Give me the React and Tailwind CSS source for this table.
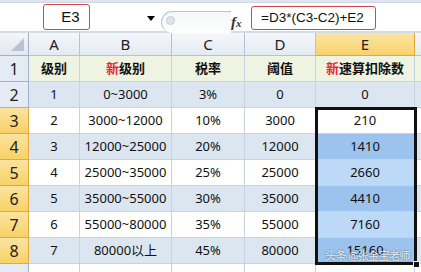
import React from 'react'

const font = { fontFamily: '"Noto Sans", "Noto Sans CJK SC", sans-serif' }
const arial = { fontFamily: '"Liberation Sans", "Noto Sans CJK SC", sans-serif' }

const rows = [
  ['1', '0~3000', '3%', '0', '0'],
  ['2', '3000~12000', '10%', '3000', '210'],
  ['3', '12000~25000', '20%', '12000', '1410'],
  ['4', '25000~35000', '25%', '25000', '2660'],
  ['5', '35000~55000', '30%', '35000', '4410'],
  ['6', '55000~80000', '35%', '55000', '7160'],
  ['7', '80000以上', '45%', '80000', '15160'],
]

function Cell({ children, className = '' }) {
  return (
    <div className={`flex items-center justify-center border-r border-b border-[#c6d3e3] text-[13px] text-[#111] ${className}`}>
      {children}
    </div>
  )
}

export default function App() {
  return (
    <div className="relative w-[421px] h-[272px] overflow-hidden bg-white" style={font}>
      {/* top strip */}
      <div className="h-[3px] bg-[#dfe6ef] border-b border-[#cfd8e4]" />

      {/* formula bar */}
      <div className="h-[30px] flex items-start border-b-2 border-[#d3dbe6] bg-white">
        <div className="ml-[43px] mt-[1px] w-[47px] h-[26px] shrink-0 border border-[#d04848] rounded-[3px] flex items-center justify-center pl-2 text-[15px] text-[#111]" style={arial}>
          E3
        </div>
        <div className="ml-[57px] mt-[13px] w-0 h-0 shrink-0 border-l-[4px] border-r-[4px] border-t-[5px] border-l-transparent border-r-transparent border-t-black" />
        <div className="ml-[6px] mt-[8px] w-[70px] h-[22px] shrink-0 rounded-l-full border-l border-t border-[#b9c4d3] bg-gradient-to-b from-[#f4f6f9] to-white flex items-start pl-[4px] pt-[4px]">
          <div className="w-[9px] h-[9px] rounded-full bg-[#dde3ec] border border-[#c6cfdb]" />
        </div>
        <div className="w-[14px] shrink-0 mt-[8px] text-[15px] italic font-bold text-[#333]" style={{ fontFamily: '"Liberation Serif", serif' }}>
          f<span className="text-[11px]">x</span>
        </div>
        <div className="ml-[6px] mt-[3px] w-[125px] h-[24px] shrink-0 border border-[#d04848] rounded-[3px] flex items-center pl-[9px] text-[13.5px] text-[#111] whitespace-nowrap" style={arial}>
          =D3*(C3-C2)+E2
        </div>
      </div>

      {/* sheet */}
      <div className="grid grid-cols-[29px_51px_92px_73px_71px_99px_1fr] grid-rows-[23px_26px_26px_26px_26px_26px_26px_26px_26px_20px]">
        {/* column headers */}
        <div className="flex items-end justify-end pr-[4px] pb-[4px] border-r border-b border-[#9fb3c8] bg-gradient-to-b from-[#f3f6fa] to-[#e2e8f0]">
          <svg width="13" height="13" viewBox="0 0 13 13">
            <polygon points="13,0 13,13 0,13" fill="#b7c4d4" />
          </svg>
        </div>
        {['A', 'B', 'C', 'D'].map((c) => (
          <div key={c} className="flex items-center justify-center border-r border-b border-[#b3c3d6] bg-gradient-to-b from-[#f5f7fa] to-[#e4eaf2] text-[15px] text-[#222]">
            {c}
          </div>
        ))}
        <div className="flex items-center justify-center border-r border-b border-[#e2a83a] bg-gradient-to-b from-[#fbe6a6] to-[#f8d26a] text-[15px] text-[#222]">
          E
        </div>
        <div className="border-b border-[#b3c3d6] bg-gradient-to-b from-[#f5f7fa] to-[#e4eaf2]" />

        {/* row 1 */}
        <div className="flex items-center justify-center border-r border-b border-[#9fb3c8] bg-[#e4ebf5] text-[16px] text-[#222]">1</div>
        <Cell className="bg-[#eff3e2] font-bold text-[#21b4d8]">级别</Cell>
        <Cell className="bg-[#eff3e2] font-bold text-[#21b4d8]"><span className="text-[#e8262b]">新</span>级别</Cell>
        <Cell className="bg-[#eff3e2] font-bold text-[#21b4d8]">税率</Cell>
        <Cell className="bg-[#eff3e2] font-bold text-[#21b4d8]">阈值</Cell>
        <Cell className="bg-[#eff3e2] font-bold text-[#21b4d8]"><span className="text-[#e8262b]">新</span>速算扣除数</Cell>
        <div className="bg-[#eff3e2] border-b border-[#c6d3e3]" />

        {rows.map((r, i) => {
          const n = i + 2
          const blue = n % 2 === 0
          const sel = n >= 3
          const bg = blue ? 'bg-[#dce6f1]' : 'bg-white'
          let ebg = bg
          if (n >= 4) ebg = blue ? 'bg-[#9cc3ee]' : 'bg-[#bcdaf8]'
          return (
            <React.Fragment key={n}>
              <div className={`flex items-center justify-center border-r border-b text-[16px] text-[#222] ${sel ? 'bg-gradient-to-b from-[#fbe3a0] to-[#f8d264] border-[#e0aa40]' : 'bg-[#e4ebf5] border-[#9fb3c8]'}`}>
                {n}
              </div>
              <Cell className={bg}>{r[0]}</Cell>
              <Cell className={bg}>{r[1]}</Cell>
              <Cell className={bg}>{r[2]}</Cell>
              <Cell className={bg}>{r[3]}</Cell>
              <Cell className={ebg}>{r[4]}</Cell>
              <div className={`${bg} border-b border-[#c6d3e3]`} />
            </React.Fragment>
          )
        })}

        {/* row 9 */}
        <div className="border-r border-[#9fb3c8] bg-[#e4ebf5]" />
        <div className="border-r border-[#c6d3e3]" />
        <div className="border-r border-[#c6d3e3]" />
        <div className="border-r border-[#c6d3e3]" />
        <div className="border-r border-[#c6d3e3]" />
        <div className="border-r border-[#c6d3e3]" />
        <div />
      </div>

      {/* selection outline E3:E8 */}
      <div className="absolute left-[315px] top-[107px] w-[102px] h-[158px] border-[3px] border-[#111]" />
      <div className="absolute left-[413px] top-[261px] w-[7px] h-[7px] bg-[#111] border border-white" />

      {/* watermark */}
      <div className="absolute left-[325px] top-[249px] text-[11px] leading-[13px] text-white/85 tracking-tighter whitespace-nowrap" style={{ textShadow: '0 0 2px rgba(0,0,0,0.6)' }}>
        头条 @张金宝老师
      </div>
    </div>
  )
}
